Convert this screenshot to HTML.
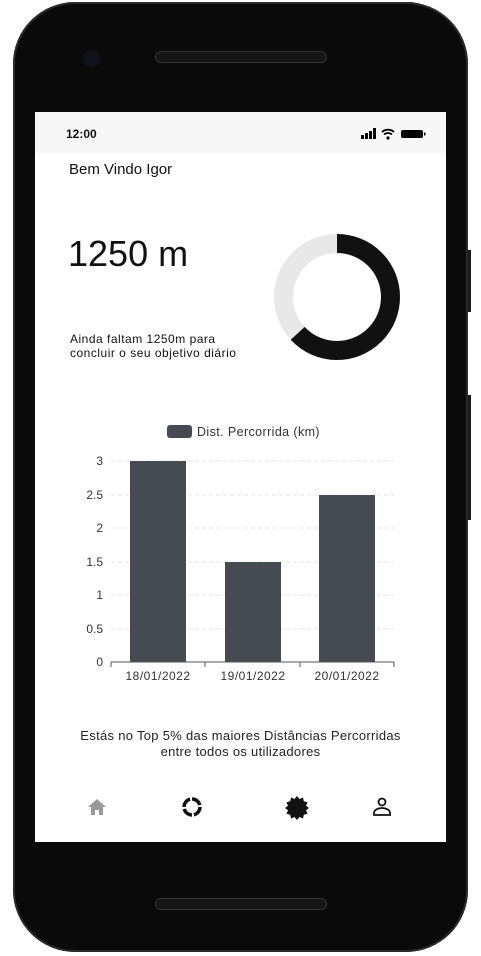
<html><head><style>
body{margin:0;width:481px;height:956px;background:#fff;position:relative;overflow:hidden;font-family:"Liberation Sans",sans-serif}
.phone{position:absolute;left:13px;top:2px;width:455px;height:950px;background:#0a0a0a;border-radius:62px;box-shadow:0 0 0 2px #2a2a2a inset}
.screen{position:absolute;left:35px;top:112px;width:411px;height:730px;background:#fff}
.t{position:absolute;white-space:nowrap;color:#111}
</style></head><body>
<div class="phone"></div>
<div style="position:absolute;left:468px;top:250px;width:3px;height:62px;background:#1a1a1a"></div>
<div style="position:absolute;left:468px;top:395px;width:3px;height:125px;background:#1a1a1a"></div>
<div style="position:absolute;left:83px;top:50px;width:17px;height:17px;border-radius:50%;background:#10131c"></div>
<div style="position:absolute;left:155px;top:51px;width:170px;height:10px;border-radius:6px;background:#151515;border:1px solid #333"></div>
<div style="position:absolute;left:155px;top:898px;width:170px;height:10px;border-radius:6px;background:#151515;border:1px solid #333"></div>
<div class="screen">
<div style="position:absolute;left:0;top:0;width:411px;height:41px;background:#f7f7f7"></div>
<div class="t" style="left:31px;top:15px;font-size:12px;font-weight:bold">12:00</div>
<svg style="position:absolute;left:326px;top:16px" width="72" height="12">
<rect x="0" y="7" width="3" height="4"/><rect x="4" y="5" width="3" height="6"/><rect x="8" y="3" width="3" height="8"/><rect x="12" y="0" width="3" height="11"/>
<path d="M21 4a9 9 0 0 1 12 0M23 6.5a6 6 0 0 1 8 0" stroke="#000" stroke-width="1.8" fill="none"/><circle cx="27" cy="10" r="1.6"/>
<rect x="40" y="2" width="22" height="8" rx="2"/><rect x="63" y="4.5" width="1.5" height="3"/>
</svg>
<div class="t" style="left:34px;top:49px;font-size:15px">Bem Vindo Igor</div>
<div class="t" style="left:33px;top:121px;font-size:36px">1250 m</div>
<div class="t" style="left:35px;top:220px;font-size:12px;line-height:14px;letter-spacing:0.5px">Ainda faltam 1250m para<br>concluir o seu objetivo diário</div>
<svg style="position:absolute;left:237px;top:121px" width="130" height="130">
<circle cx="65" cy="64" r="53.5" stroke="#e8e8e8" stroke-width="19" fill="none"/>
<circle cx="65" cy="64" r="53.5" stroke="#111" stroke-width="19" fill="none" stroke-dasharray="212 400" transform="rotate(-90 65 64)"/>
</svg>
<svg style="position:absolute;left:0;top:300px" width="411" height="280" font-family="Liberation Sans" font-size="12" fill="#333">
<rect x="132" y="13" width="25" height="13" rx="3" fill="#464b51"/>
<text x="162" y="24" fill="#333" font-size="12.5" letter-spacing="0.4">Dist. Percorrida (km)</text>
<g stroke="#e6e6e6" stroke-dasharray="4 3"><line x1="76" y1="49" x2="359" y2="49"/><line x1="76" y1="83" x2="359" y2="83"/><line x1="76" y1="116" x2="359" y2="116"/><line x1="76" y1="150" x2="359" y2="150"/><line x1="76" y1="183" x2="359" y2="183"/><line x1="76" y1="217" x2="359" y2="217"/></g>
<g text-anchor="end"><text x="68" y="53">3</text><text x="68" y="87">2.5</text><text x="68" y="120">2</text><text x="68" y="154">1.5</text><text x="68" y="187">1</text><text x="68" y="221">0.5</text><text x="68" y="254">0</text></g>
<rect x="95" y="49" width="56" height="201" fill="#464b51"/>
<rect x="190" y="150" width="56" height="100" fill="#464b51"/>
<rect x="284" y="83" width="56" height="167" fill="#464b51"/>
<line x1="76" y1="250" x2="359" y2="250" stroke="#555"/>
<g stroke="#555"><line x1="76" y1="250" x2="76" y2="255"/><line x1="170" y1="250" x2="170" y2="255"/><line x1="265" y1="250" x2="265" y2="255"/><line x1="359" y1="250" x2="359" y2="255"/></g>
<g text-anchor="middle" letter-spacing="0.5"><text x="123" y="268">18/01/2022</text><text x="218" y="268">19/01/2022</text><text x="312" y="268">20/01/2022</text></g>
</svg>
<div class="t" style="left:0;width:411px;text-align:center;top:616px;font-size:13px;line-height:16px;color:#222;letter-spacing:0.3px">Estás no Top 5% das maiores Distâncias Percorridas<br>entre todos os utilizadores</div>
<svg style="position:absolute;left:52px;top:686px" width="20" height="18"><path d="M10 1L1 9h3v8h4v-5h4v5h4V9h3z" fill="#999"/></svg>
<svg style="position:absolute;left:145px;top:683px" width="24" height="24"><circle cx="12" cy="12" r="8" stroke="#111" stroke-width="3.5" fill="none" stroke-dasharray="10.5 2"/></svg>
<svg style="position:absolute;left:249px;top:683px" width="26" height="26"><path d="M13 1l2.5 3 3.5-1.5.8 3.8 3.7.9-1.5 3.5 3 2.3-3 2.3 1.5 3.5-3.7.9-.8 3.8-3.5-1.5L13 25l-2.5-3-3.5 1.5-.8-3.8-3.7-.9 1.5-3.5-3-2.3 3-2.3-1.5-3.5 3.7-.9.8-3.8 3.5 1.5z" fill="#111"/></svg>
<svg style="position:absolute;left:336px;top:684px" width="22" height="22"><circle cx="11" cy="6" r="3.5" stroke="#111" stroke-width="1.8" fill="none"/><path d="M3 19v-2c0-3 4-5 8-5s8 2 8 5v2z" stroke="#111" stroke-width="1.8" fill="none"/></svg>
</div>
</body></html>
